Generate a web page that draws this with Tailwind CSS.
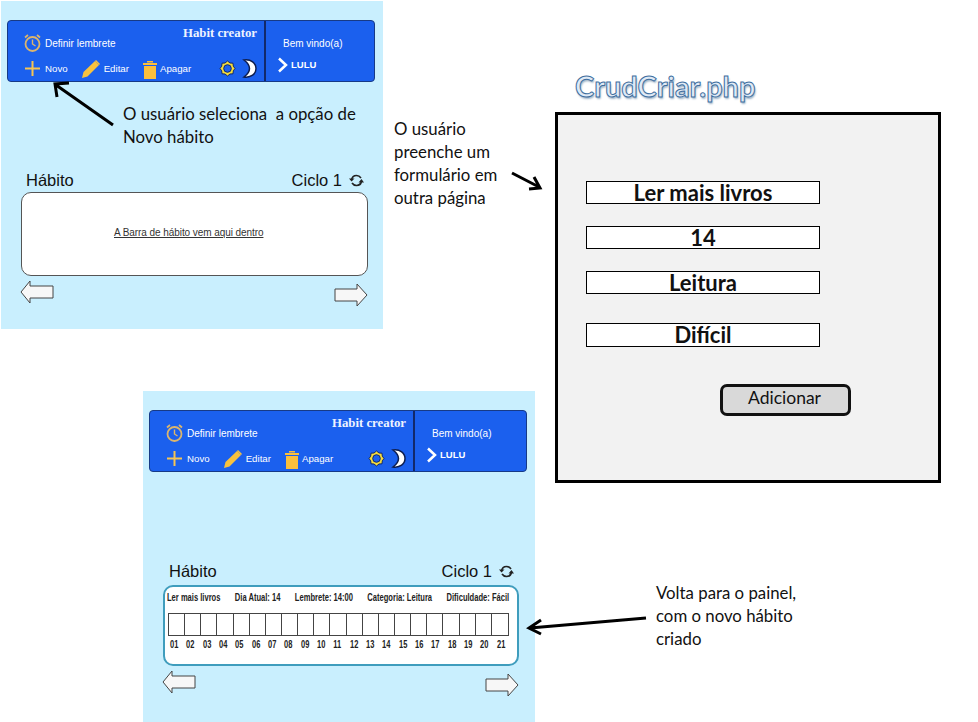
<!DOCTYPE html>
<html lang="pt-BR">
<head>
    <meta charset="UTF-8">
    <title>Fluxo - novo hábito</title>
    <script src="https://cdn.jsdelivr.net/npm/@tailwindcss/browser@4"></script>
</head>
<body class="bg-white font-['Lato',sans-serif] text-[#111]">
<div class="relative w-[978px] h-[722px] overflow-hidden">

    <!-- Painel 1 -->
    <section class="absolute left-[1px] top-[1px] w-[382px] h-[328px] bg-[#c9effe] pt-[19px] px-[6px]">
        <div id="header1" class="w-[368px]"></div>
        <div class="mt-[88px] ml-[19px] mr-[13px] h-[20px] flex justify-between font-['Liberation_Sans',sans-serif] text-[16.5px] leading-[20px]">
            <span>Hábito</span>
            <span data-ciclo></span>
        </div>
        <div class="mt-[2px] ml-[14px] w-[347px] h-[84px] bg-white border border-[#555] rounded-[10px] flex items-center pl-[92px] pb-[3px]">
            <span class="font-['Liberation_Sans',sans-serif] text-[10px] tracking-[-0.07px] text-[#333] underline">A Barra de hábito vem aqui dentro</span>
        </div>
        <div data-setas class="mt-[4px] ml-[13px] w-[348px]"></div>
    </section>

    <!-- Painel 2 -->
    <section class="absolute left-[143px] top-[391px] w-[392px] h-[331px] bg-[#c9effe] pt-[19px] px-[6px]">
        <div id="header2" class="w-[378px]"></div>
        <div class="mt-[89px] ml-[20px] mr-[15px] h-[20px] flex justify-between font-['Liberation_Sans',sans-serif] text-[16.5px] leading-[20px]">
            <span>Hábito</span>
            <span data-ciclo></span>
        </div>
        <div class="mt-[4px] ml-[14px] w-[356px] h-[81px] bg-white border-2 border-[#3f9dbd] rounded-[10px] pl-[2px] pr-[8px] pt-[5px] font-['Liberation_Sans',sans-serif] font-bold text-[#222]">
            <div class="w-[452px] origin-left scale-x-[0.757] flex justify-between text-[10px] leading-[12px]">
                <span>Ler mais livros</span>
                <span>Dia Atual: 14</span>
                <span>Lembrete: 14:00</span>
                <span>Categoria: Leitura</span>
                <span>Dificuldade: Fácil</span>
            </div>
            <div id="barra" class="mt-[9px] ml-[1px] h-[23px] grid grid-cols-[repeat(21,1fr)] border border-[#444] bg-white"></div>
            <div id="dias" class="mt-[3px] -ml-[1px] grid grid-cols-[repeat(21,1fr)] text-[10px] leading-[12px] text-center"></div>
        </div>
        <div data-setas class="mt-[4px] ml-[13px] w-[357px]"></div>
    </section>

    <!-- Anotações -->
    <p class="absolute left-[123px] top-[102px] text-[16.8px] leading-[23px] whitespace-pre">O usuário seleciona  a opção de
Novo hábito</p>
    <p class="absolute left-[394px] top-[117px] text-[16.8px] leading-[23px] whitespace-pre">O usuário
preenche um
formulário em
outra página</p>
    <p class="absolute left-[656px] top-[581px] text-[16.8px] leading-[23px] whitespace-pre">Volta para o painel,
com o novo hábito
criado</p>

    <h2 class="absolute left-[575px] top-[67px] text-[29px] leading-[38px] font-bold text-[#dfeaf6] [-webkit-text-stroke:1px_#3f6f9f] [text-shadow:1px_2px_2px_#9fb4c8]">CrudCriar.php</h2>

    <!-- Formulário -->
    <section class="absolute left-[555px] top-[112px] w-[386px] h-[371px] bg-[#f2f2f2] border-[3px] border-black flex flex-col pl-[28px] pt-[66px]">
        <div class="w-[234px] h-[23px] pb-[1px] bg-white border border-black flex items-center justify-center text-[22px] font-bold">Ler mais livros</div>
        <div class="mt-[22px] w-[234px] h-[23px] pb-[1px] bg-white border border-black flex items-center justify-center text-[22px] font-bold">14</div>
        <div class="mt-[22px] w-[234px] h-[23px] pb-[1px] bg-white border border-black flex items-center justify-center text-[22px] font-bold">Leitura</div>
        <div class="mt-[29px] w-[234px] h-[24px] pb-[1px] bg-white border border-black flex items-center justify-center text-[22px] font-bold">Difícil</div>
        <button class="mt-[37px] ml-[134px] w-[131px] h-[32px] pb-[4px] pr-[2px] bg-[#d9d9d9] border-[3px] border-[#111] rounded-[7px] text-[17.5px] leading-none">Adicionar</button>
    </section>

    <!-- Setas das anotações -->
    <svg class="absolute left-0 top-0 pointer-events-none" width="978" height="722" fill="none" stroke="#000" stroke-width="3">
        <path d="M113 125 56 85M57 97 55 84 69 83"/>
        <path d="M512 173 539 187M529 189 540 188 534 177"/>
        <path d="M646 618 530 628M541 620 529 628 541 634"/>
    </svg>
</div>

<script>
    // Cabeçalho igual nos dois painéis, só muda a largura da parte esquerda
    function headerHtml(leftClass) {
        return `
        <div class="flex h-[62px] rounded-[4px] border border-[#173a86] bg-[#1b60ee] text-white font-['Liberation_Sans',sans-serif]">
            <div class="${leftClass} shrink-0 border-r-2 border-[#12296b] pl-[16px] pr-[7px] flex flex-col">
                <div class="h-[32px] flex justify-between">
                    <div class="flex items-end gap-[4px] text-[10px] leading-[14px]">
                        <svg width="17" height="20" viewBox="0 0 17 20" fill="none" stroke="#dcb56d">
                            <circle cx="8.500" cy="11" r="7" stroke-width="1.800"/>
                            <path d="M8.500 6.500V11l3 2" stroke-width="1.400"/>
                            <path d="M1 4.500 4 2M16 4.500 13 2" stroke-width="1.800"/>
                        </svg>
                        <span class="mb-[2px]">Definir lembrete</span>
                    </div>
                    <span class="mt-[5px] font-['Liberation_Serif',serif] font-bold text-[12.8px] leading-[14px] text-[#eef3ff]">Habit creator</span>
                </div>
                <div class="flex-1 flex items-center text-[9.700px] leading-[14px] pt-[3px]">
                    <svg class="ml-[1px]" width="15" height="15" viewBox="0 0 15 15" stroke="#f6c453" stroke-width="2"><path d="M7.500 0v15M0 7.500h15"/></svg>
                    <span class="ml-[5px]">Novo</span>
                    <svg class="ml-[13px]" width="20" height="20" viewBox="0 0 20 20"><path d="M1 19 2.500 13 14 2l4 4L6.500 17.500Z" fill="#f8c23e"/><path d="M15 1l4 4-1 1-4-4Z" fill="#f8c23e"/></svg>
                    <span class="ml-[3px]">Editar</span>
                    <svg class="ml-[13px]" width="16" height="20" viewBox="0 0 16 20" fill="#fbbf3c"><path d="M1 4h14v2H1ZM5 2h6v1.500H5ZM2 7h12v13H2Z"/></svg>
                    <span class="ml-[2px]">Apagar</span>
                    <svg class="ml-auto" width="17" height="17" viewBox="0 0 17 17">
                        <path d="M8.500 1 11 3l3 .2.300 3L16 8.500l-1.700 2.300-.3 3-3 .2-2.500 2-2.500-2-3-.2-.3-3L1 8.500l1.700-2.300.3-3L6 3Z" fill="#f5dc3c" stroke="#12296b"/>
                        <circle cx="8.500" cy="8.500" r="3.800" fill="#1b60ee" stroke="#12296b"/>
                    </svg>
                    <svg class="ml-[6px]" width="15" height="19" viewBox="0 0 15 19"><path d="M2 1C9 0 14 4 14 9.500S9 19 2 18C6 15 7.500 12.500 7.500 9.500S6 4 2 1Z" fill="#fff" stroke="#0d1d4f" stroke-width="1.500"/></svg>
                </div>
            </div>
            <div class="flex-1 flex flex-col pl-[11px] pt-[15px] text-[10px] leading-[14px]">
                <span class="ml-[6px] mt-[1px]">Bem vindo(a)</span>
                <div class="mt-[6px] flex items-center gap-[3px] font-bold text-[9.500px]">
                    <svg width="11" height="16" viewBox="0 0 11 16" fill="none" stroke="#fff" stroke-width="2.500"><path d="M2 1.500 9 8l-7 6.500"/></svg>
                    <span>LULU</span>
                </div>
            </div>
        </div>`;
    }

    const cicloHtml = `
        <span class="flex items-center gap-[7px]">Ciclo 1
            <svg width="15" height="13" viewBox="0 0 15 13" fill="none" stroke="#222" stroke-width="1.600">
                <path d="M2.500 6C3 3 5 1.500 7.500 1.500 9.500 1.500 11 2.500 12 4"/>
                <path d="M12.500 7C12 10 10 11.500 7.500 11.500 5.500 11.500 4 10.500 3 9"/>
                <path d="M0 4.500l2.500 3L5.500 4.500M9.500 8.500l3-3.500L15 8.500" fill="#222" stroke="none"/>
            </svg>
        </span>`;

    const setasHtml = `
        <div class="flex justify-between items-start">
            <svg width="34" height="24" viewBox="0 0 34 24" fill="#f7f7f7" stroke="#444"><path d="M33 6H10V1L1 12l9 11v-5h23Z"/></svg>
            <svg class="mt-[3px]" width="34" height="24" viewBox="0 0 34 24" fill="#f7f7f7" stroke="#444"><path d="M1 6h22V1l10 11-10 11v-5H1Z"/></svg>
        </div>`;

    document.getElementById('header1').innerHTML = headerHtml('w-[258px]');
    document.getElementById('header2').innerHTML = headerHtml('w-[265px]');
    document.querySelectorAll('[data-ciclo]').forEach(el => el.innerHTML = cicloHtml);
    document.querySelectorAll('[data-setas]').forEach(el => el.innerHTML = setasHtml);

    // Barra de 21 dias
    const barra = document.getElementById('barra');
    const dias = document.getElementById('dias');
    for (let i = 1; i <= 21; i++) {
        barra.innerHTML += `<div class="${i < 21 ? 'border-r border-[#444]' : ''}"></div>`;
        dias.innerHTML += `<span class="inline-block scale-x-75">${String(i).padStart(2, '0')}</span>`;
    }
</script>
</body>
</html>
